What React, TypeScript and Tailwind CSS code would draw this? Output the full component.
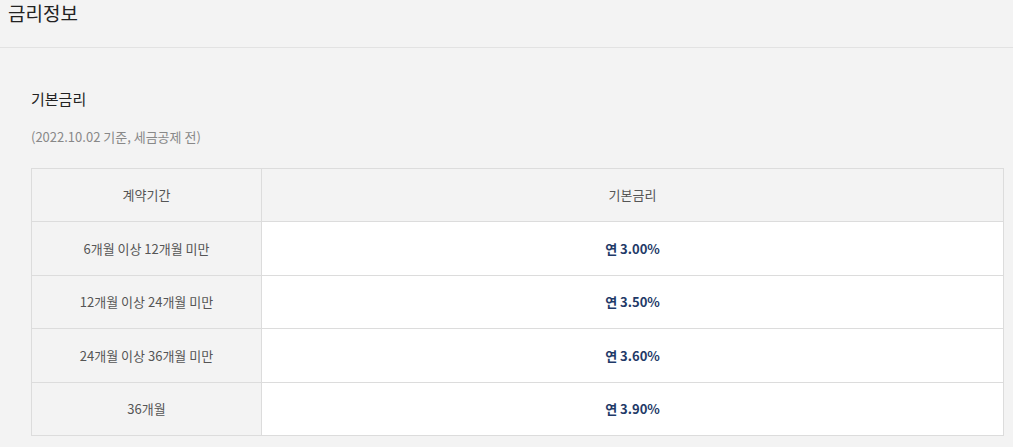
const rows = [
  { term: "6개월 이상 12개월 미만", rate: "연 3.00%" },
  { term: "12개월 이상 24개월 미만", rate: "연 3.50%" },
  { term: "24개월 이상 36개월 미만", rate: "연 3.60%" },
  { term: "36개월", rate: "연 3.90%" },
];

const App = () => {
  return (
    <div
      className="min-h-[447px] bg-[#f3f3f3] text-[#222]"
      style={{ fontFamily: '"Noto Sans CJK KR", "Noto Sans", sans-serif' }}
    >
      <div className="h-[48px] border-b border-[#e2e2e2] pl-2">
        <h2 className="text-[19px] leading-[24px] pt-[1px]">금리정보</h2>
      </div>

      <div className="pl-[31px] pr-[9px] pt-[40px]">
        <h3 className="text-[15px] leading-[22px]">기본금리</h3>
        <p className="mt-[17px] text-[13px] leading-[20px] text-[#888]">
          (2022.10.02 기준, 세금공제 전)
        </p>

        <table className="mt-[21px] w-full border-collapse border border-[#dcdcdc] text-[13px] text-[#555]">
          <thead>
            <tr className="h-[53.4px] bg-[#f3f3f3]">
              <th className="w-[230px] border border-[#dcdcdc] font-normal">계약기간</th>
              <th className="border border-[#dcdcdc] font-normal">기본금리</th>
            </tr>
          </thead>
          <tbody>
            {rows.map((r) => (
              <tr key={r.term} className="h-[53.4px]">
                <td className="border border-[#dcdcdc] bg-[#f3f3f3] text-center">{r.term}</td>
                <td className="border border-[#dcdcdc] bg-white text-center font-bold text-[#1f3a68]">
                  {r.rate}
                </td>
              </tr>
            ))}
          </tbody>
        </table>
      </div>
    </div>
  );
};

export default App;
